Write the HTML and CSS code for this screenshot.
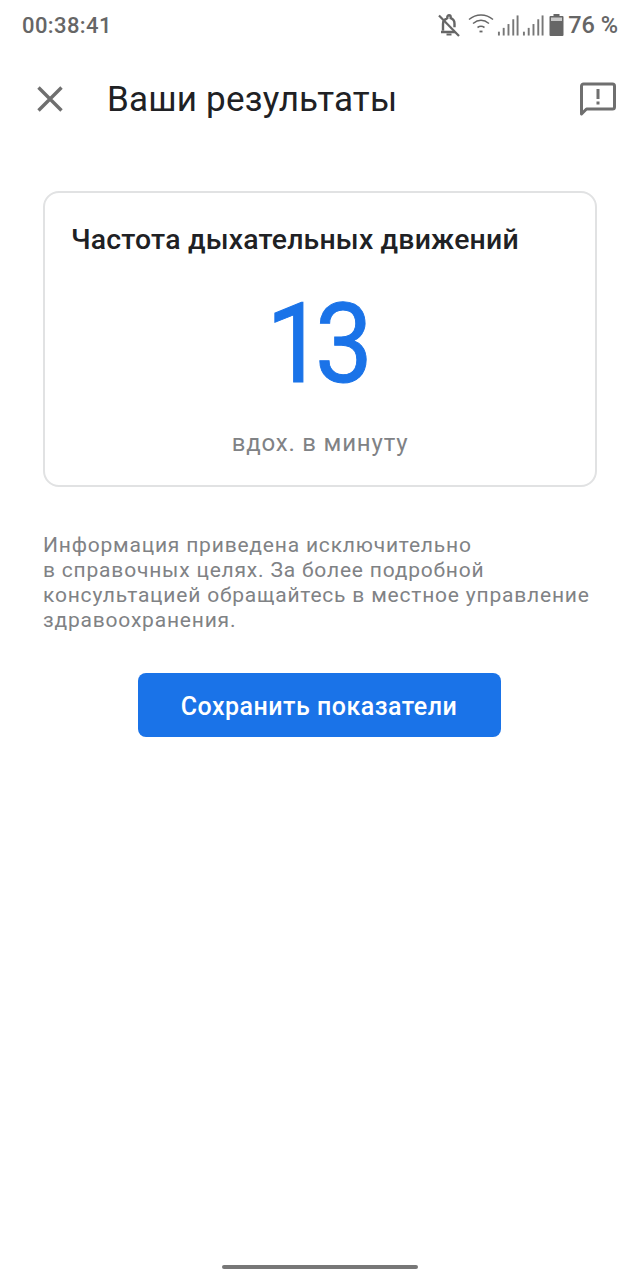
FILE: index.html
```html
<!DOCTYPE html>
<html lang="ru">
<head>
<meta charset="utf-8">
<title>Ваши результаты</title>
<link rel="stylesheet" href="styles.css">
</head>
<body>
<div class="phone">
  <div class="status">
    <span class="time">00:38:41</span>
    <div class="status-right">
      <svg class="ic-bell" width="24" height="24" viewBox="0 0 24 24" fill="none"><path d="M6 17.500V11c0-2 .6-3.400 2-4.400L10.300 5.200V4a1.700 1.700 0 0 1 3.400 0v1.200c2.400.8 3.800 2.800 3.800 5.500v3.500M4 19h14" stroke="#666" stroke-width="2.400"/><path d="M9.500 21.500h5" stroke="#666" stroke-width="2"/><path d="M2 2.500L22 23" stroke="#666" stroke-width="2.200"/></svg>
      <svg class="ic-wifi" width="26" height="22" viewBox="0 0 26 22" fill="none" stroke="#666" stroke-width="1.500"><path d="M1 7.500C8 1.500 18 1.500 25 7.500"/><path d="M5 11.500C10 7.500 16 7.500 21 11.500"/><path d="M9.500 15.500C11.500 14.200 14.500 14.200 16.500 15.500"/><path d="M11.500 19.500h3" stroke-width="1.800"/></svg>
      <svg class="ic-sig" width="22" height="24" viewBox="0 0 23 24" fill="#777"><rect x="1" y="19" width="2" height="4"/><rect x="6" y="15" width="2" height="8"/><rect x="11" y="11" width="2" height="12"/><rect x="16" y="6" width="2" height="17"/><rect x="20.500" y="2" width="2" height="21"/></svg>
      <svg class="ic-sig" width="22" height="24" viewBox="0 0 23 24" fill="#777"><rect x="1" y="19" width="2" height="4"/><rect x="6" y="15" width="2" height="8"/><rect x="11" y="11" width="2" height="12"/><rect x="16" y="6" width="2" height="17"/><rect x="20.500" y="2" width="2" height="21"/></svg>
      <svg class="ic-batt" width="15" height="24" viewBox="0 0 15 24"><path d="M4.500 1h6v2h3a1 1 0 0 1 1 1v18a1 1 0 0 1-1 1H1.500a1 1 0 0 1-1-1V4a1 1 0 0 1 1-1h3z" fill="#666"/><rect x="2" y="4.500" width="11" height="3.500" fill="#c9c9c9"/></svg>
      <span class="pct">76 %</span>
    </div>
  </div>

  <header class="appbar">
    <svg class="close" width="26" height="26" viewBox="0 0 26 26" fill="none" stroke="#6f6f6f" stroke-width="3.400"><path d="M1.500 1.500L24.500 24.500M24.500 1.500L1.500 24.500"/></svg>
    <h1 class="title">Ваши результаты</h1>
    <svg class="feedback" width="36" height="36" viewBox="0 0 36 36" fill="none"><path d="M1.500 33V5a2 2 0 0 1 2-2h29a2 2 0 0 1 2 2v21a2 2 0 0 1-2 2H6.500z" stroke="#6f6f6f" stroke-width="3" stroke-linejoin="round"/><path d="M16.500 8h3v10h-3zM16.500 20.500h3v3h-3z" fill="#6f6f6f"/></svg>
  </header>

  <main class="content">
    <section class="card">
      <h2 class="card-title">Частота дыхательных движений</h2>
      <div class="value">13</div>
      <div class="unit">вдох. в минуту</div>
    </section>
    <p class="note">Информация приведена исключительно<br>в справочных целях. За более подробной<br>консультацией обращайтесь в местное управление<br>здравоохранения.</p>
    <button class="save">Сохранить показатели</button>
  </main>

  <div class="home-bar"></div>
</div>
</body>
</html>
```
FILE: styles.css
```css
* { box-sizing: border-box; }
html, body { margin: 0; padding: 0; background: #fff; }
.phone {
  width: 640px;
  height: 1280px;
  display: flex;
  flex-direction: column;
  font-family: Roboto, "Noto Sans", sans-serif;
  overflow: hidden;
}
.status {
  height: 50px;
  padding: 0 22px;
  display: flex;
  align-items: center;
  justify-content: space-between;
  color: #666;
}
.time { font-size: 22px; font-weight: 500; letter-spacing: 0.4px; }
.status-right { display: flex; align-items: center; gap: 2px; }
.ic-wifi { margin-left: 5px; margin-top: -4px; }
.ic-sig { margin-left: 1px; }
.ic-batt { margin-left: 3px; }
.pct { font-size: 23.500px; font-weight: 500; margin-left: 2px; }
.appbar {
  height: 98px;
  padding: 0 24px 0 37px;
  display: flex;
  align-items: center;
}
.close { flex: none; }
.title {
  margin: 0 0 0 44px;
  flex: 1;
  font-size: 35px;
  font-weight: 400;
  color: #202124;
  letter-spacing: 0.2px;
}
.feedback { flex: none; }
.content {
  padding: 43px 43px 0;
  display: flex;
  flex-direction: column;
  align-items: stretch;
}
.card {
  height: 296px;
  border: 2px solid #e1e2e3;
  border-radius: 16px;
  padding: 29px 26px 0;
  display: flex;
  flex-direction: column;
}
.card-title {
  margin: 0;
  font-size: 28.400px;
  line-height: 36px;
  font-weight: 500;
  color: #202124;
  letter-spacing: 0.2px;
}
.value {
  margin-top: 20px;
  padding-right: 11px;
  text-align: center;
  font-size: 112px;
  line-height: 132px;
  font-weight: 400;
  color: #1a73e8;
  letter-spacing: -10px;
  -webkit-text-stroke: 1px #1a73e8;
  transform: scaleX(0.92);
}
.unit {
  margin-top: 18px;
  text-align: center;
  font-size: 24px;
  line-height: 30px;
  color: #808285;
  letter-spacing: 0.8px;
}
.note {
  margin: 46px 0 0;
  font-size: 21px;
  line-height: 25px;
  color: #808285;
  letter-spacing: 0.8px;
  white-space: nowrap;
}
.save {
  align-self: center;
  margin-top: 40px;
  margin-left: -2px;
  width: 363px;
  height: 64px;
  border: 0;
  border-radius: 8px;
  background: #1a73e8;
  color: #fff;
  font-family: inherit;
  font-size: 25px;
  font-weight: 500;
  letter-spacing: 0.5px;
  padding: 3px 0 0;
}
.home-bar {
  margin: auto auto 11px;
  width: 196px;
  height: 4px;
  background: #777;
  border-radius: 2px;
}
```
